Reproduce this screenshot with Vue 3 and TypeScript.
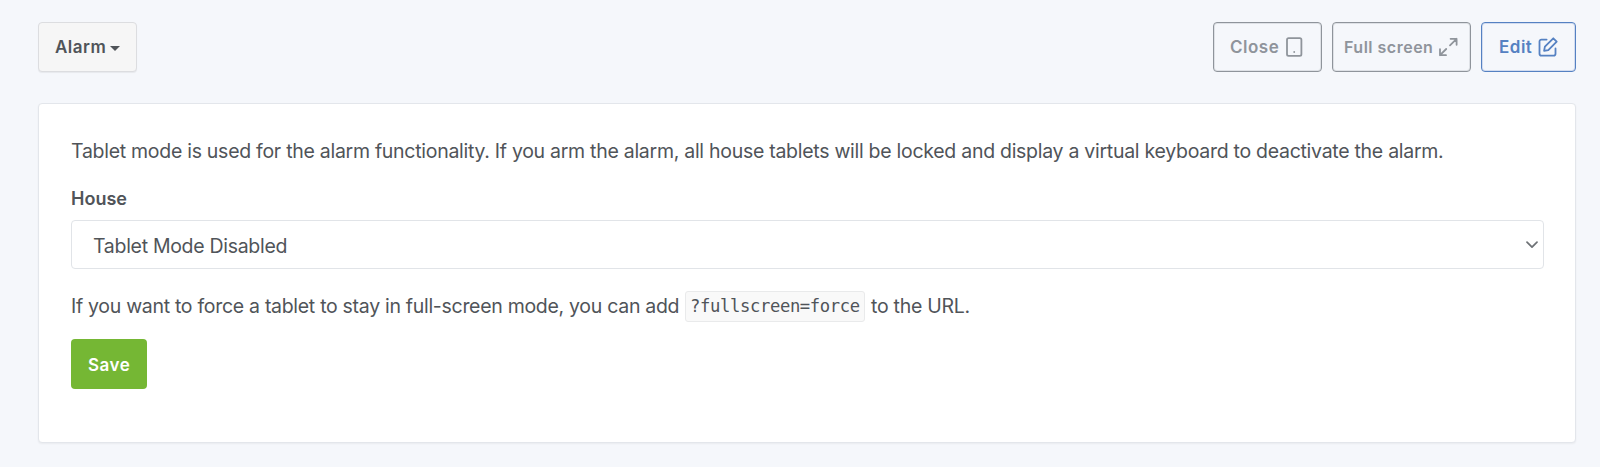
<script setup lang="ts">
import { ref } from 'vue'

const house = ref<string>('Tablet Mode Disabled')
</script>

<template>
  <main class="page">
    <header class="toolbar">
      <button class="btn btn-menu"><span>Alarm</span><i class="caret"></i></button>
      <div class="actions">
        <button class="btn btn-close">
          <span>Close</span>
          <svg width="20" height="20" viewBox="0 0 20 20" class="icon">
            <rect x="3" y="1.2" width="14.4" height="17.6" rx="1.6" />
            <path d="M10.2 15h.01" />
          </svg>
        </button>
        <button class="btn btn-full">
          <span>Full screen</span>
          <svg width="20" height="20" viewBox="0 0 20 20" class="icon">
            <path d="M12.6 1.8h6v6M18.6 1.8l-6.6 6.6M8 18.2H2v-6M2 18.2l6.2-6.2" />
          </svg>
        </button>
        <button class="btn btn-edit">
          <span>Edit</span>
          <svg width="20" height="20" viewBox="0 0 20 20" class="icon">
            <path d="M8.6 2.6H3.4a1.9 1.9 0 0 0-1.9 1.9v12.2a1.9 1.9 0 0 0 1.9 1.9h12.2a1.9 1.9 0 0 0 1.9-1.9v-5.2" />
            <path d="M15.3 1.3l3.4 3.4-8.4 8.4-4.2.8.8-4.2z" />
          </svg>
        </button>
      </div>
    </header>

    <section class="card">
      <p class="intro">Tablet mode is used for the alarm functionality. If you arm the alarm, all house tablets will be locked and display a virtual keyboard to deactivate the alarm.</p>
      <div class="label">House</div>
      <div class="select">
        <span>{{ house }}</span>
        <svg width="12" height="8" viewBox="0 0 12 8" class="chevron"><path d="M1 1.2l5 5 5-5" /></svg>
      </div>
      <p class="hint"><span class="before">If you want to force a tablet to stay in full-screen mode, you can add</span><code>?fullscreen=force</code><span class="after">to the URL.</span></p>
      <button class="btn btn-save">Save</button>
    </section>
  </main>
</template>

<style>
body {
  background: #f5f7fb;
}
</style>

<style scoped>
.page {
  box-sizing: border-box;
  height: 467px;
  padding: 22px 24px 24px 38px;
  background: #f5f7fb;
  color: #505459;
  font-family: Inter, "Liberation Sans", sans-serif;
  font-size: 19.5px;
  letter-spacing: -0.28px;
}
.toolbar {
  display: flex;
  justify-content: space-between;
  height: 50px;
}
.actions {
  display: flex;
  gap: 10px;
}
.btn {
  box-sizing: border-box;
  display: flex;
  align-items: center;
  height: 50px;
  padding: 0 0 0 17px;
  border: 1px solid;
  border-radius: 4px;
  background: transparent;
  font-family: inherit;
  font-size: 17px;
  font-weight: 600;
  letter-spacing: 0.5px;
  white-space: nowrap;
}
.btn-menu {
  width: 99px;
  padding-left: 16px;
  border: 1px solid #dcdde0;
  background: #f6f6f6;
  color: #505459;
  box-shadow: 0 1px 1px rgba(0, 0, 0, 0.06);
}
.caret {
  margin: 2px 0 0 4px;
  border: 5px solid transparent;
  border-top-color: #505459;
  border-bottom: 0;
}
.btn-close,
.btn-full {
  color: #8f949b;
  border-color: #8f949b;
  box-shadow: inset 0 0 0 1px rgba(143, 148, 155, 0.22);
}
.btn-close {
  width: 109px;
  padding-left: 16px;
}
.btn-full {
  width: 139px;
  padding-left: 11px;
  font-size: 16px;
}
.btn-edit {
  width: 95px;
  padding-left: 17px;
  color: #5581c2;
  border-color: #5581c2;
  box-shadow: inset 0 0 0 1px rgba(85, 129, 194, 0.22);
}
.icon {
  flex: none;
  margin-left: 5px;
  fill: none;
  stroke: currentColor;
  stroke-width: 1.8;
  stroke-linecap: round;
  stroke-linejoin: round;
}
.btn-edit .icon {
  margin-left: 6px;
}
.card {
  box-sizing: border-box;
  height: 340px;
  margin-top: 31px;
  padding: 31px 31px 0 32px;
  border: 1px solid #e3e6eb;
  border-radius: 4px;
  background: #fff;
  box-shadow: 0 1px 2px rgba(0, 0, 0, 0.05);
}
p {
  margin: 0;
  white-space: nowrap;
}
.intro {
  height: 32px;
  line-height: 32px;
}
.label {
  height: 24px;
  margin-top: 20px;
  font-size: 18px;
  font-weight: 600;
  letter-spacing: 0;
  line-height: 24px;
}
.select {
  box-sizing: border-box;
  display: flex;
  align-items: center;
  justify-content: space-between;
  height: 49px;
  margin-top: 9px;
  padding: 0 5px 0 21px;
  border: 1px solid #e1e4e8;
  border-radius: 4px;
}
.select span {
  padding-top: 2px;
  letter-spacing: -0.3px;
}
.chevron {
  fill: none;
  stroke: #6e7276;
  stroke-width: 1.7;
  stroke-linecap: round;
  stroke-linejoin: round;
}
.hint {
  display: flex;
  align-items: center;
  height: 32px;
  margin-top: 21px;
}
.before {
  width: 614px;
  letter-spacing: -0.295px;
}
code {
  box-sizing: border-box;
  width: 180px;
  height: 31px;
  padding-left: 4px;
  border: 1px solid #e9eaeb;
  border-radius: 3px;
  background: #f9f9f9;
  font-family: "DejaVu Sans Mono", monospace;
  font-size: 17.2px;
  letter-spacing: -0.36px;
  line-height: 29px;
}
.after {
  margin-left: 6px;
}
.btn-save {
  width: 76px;
  margin-top: 17px;
  padding: 1px 0 0 17px;
  border: 0;
  background: #75b734;
  color: #fff;
}
</style>
